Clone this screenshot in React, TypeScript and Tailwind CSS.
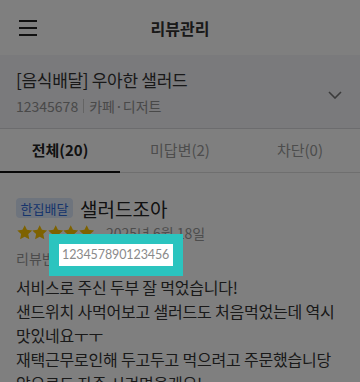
import React from "react";

const font = { fontFamily: '"Noto Sans CJK KR", "Noto Sans", sans-serif' };
const numFont = { fontFamily: 'Lato, "Noto Sans", sans-serif' };

function Star() {
  return (
    <svg width="15.4" height="15" viewBox="0 0 24 23" className="block">
      <path
        d="M12 0l3.5 7.4 8.1 1-6 5.6 1.6 8-7.2-4-7.2 4 1.6-8-6-5.6 8.1-1z"
        fill="#fdc500"
      />
    </svg>
  );
}

export default function App() {
  return (
    <div className="relative w-[360px] h-[382px] overflow-hidden bg-white" style={font}>
      {/* Header */}
      <div className="relative h-[55px] flex items-center justify-center">
        <div className="absolute left-[19px] top-[20px] w-[18px] flex flex-col gap-[5px]">
          <div className="h-[2px] bg-[#222]" />
          <div className="h-[2px] bg-[#222]" />
          <div className="h-[2px] bg-[#222]" />
        </div>
        <span className="text-[16px] font-bold text-[#333] leading-none">리뷰관리</span>
      </div>
      {/* Store */}
      <div className="h-[74px] bg-[#f4f4f8] border-b border-[#d8d8dc] px-4 flex items-center justify-between">
        <div className="flex flex-col pt-[2px]">
          <div className="text-[17px] text-[#333] leading-[22px] tracking-[-0.3px]">[음식배달] 우아한 샐러드</div>
          <div className="mt-[5px] text-[14px] text-[#929292] leading-[20px] flex items-center">
            <span>12345678</span>
            <span className="mx-[5px] w-px h-[14px] bg-[#c8c8c8]" />
            <span>카페·디저트</span>
          </div>
        </div>
        <svg width="14" height="8" viewBox="0 0 14 8" className="mr-[2px] mt-[6px]">
          <path d="M1 1l6 6 6-6" stroke="#777" strokeWidth="1.6" fill="none" />
        </svg>
      </div>
      {/* Tabs */}
      <div className="flex h-[44px] border-b border-[#dedede]">
        <div className="relative flex-1 flex items-center justify-center text-[15px] font-bold text-[#222]">
          전체(20)
          <div className="absolute left-0 right-0 bottom-[-1px] h-[2px] bg-[#111]" />
        </div>
        <div className="flex-1 flex items-center justify-center text-[15px] text-[#9a9a9a]">미답변(2)</div>
        <div className="flex-1 flex items-center justify-center text-[15px] text-[#9a9a9a]">차단(0)</div>
      </div>
      {/* Review */}
      <div className="px-4 pt-[25px]">
        <div className="flex items-center">
          <span className="h-[20px] w-[57px] rounded-[4px] bg-[#dce8fb] text-[#2f6ad9] text-[13px] flex items-center justify-center leading-none">
            한집배달
          </span>
          <span className="ml-[7px] text-[19px] text-[#222] leading-none">샐러드조아</span>
        </div>
        <div className="mt-[7px] flex items-center pl-[1px]">
          <div className="flex">
            <Star />
            <Star />
            <Star />
            <Star />
            <Star />
          </div>
          <span className="ml-[12px] text-[14px] text-[#9a9a9a] leading-none">2025년 6월 18일</span>
        </div>
        <div className="mt-[8px] h-[20px] text-[14px] text-[#999] leading-[20px] flex items-center whitespace-nowrap">
          <span>리뷰번호</span>
          <span className="ml-[4px] text-[12.5px]" style={numFont}>123457890123456</span>
        </div>
        <div className="mt-[7px] text-[16px] text-[#333] leading-[24px] tracking-[-0.2px]">
          <p>서비스로 주신 두부 잘 먹었습니다!</p>
          <p>샌드위치 사먹어보고 샐러드도 처음먹었는데 역시 맛있네요ㅜㅜ</p>
          <p>재택근무로인해 두고두고 먹으려고 주문했습니당</p>
          <p>앞으로도 자주 시켜먹을게요!</p>
        </div>
      </div>
      {/* Dim overlay */}
      <div className="absolute inset-0 bg-black/50" />
      {/* Spotlight */}
      <div className="absolute left-[49px] top-[234px] w-[134px] h-[42px] bg-[#2bc4bf] p-[10px]">
        <div
          className="h-[22px] bg-white flex items-center pl-[3px] text-[12.5px] text-[#8a8a8a] leading-none tracking-[-0.1px]"
          style={numFont}
        >
          123457890123456
        </div>
      </div>
    </div>
  );
}
